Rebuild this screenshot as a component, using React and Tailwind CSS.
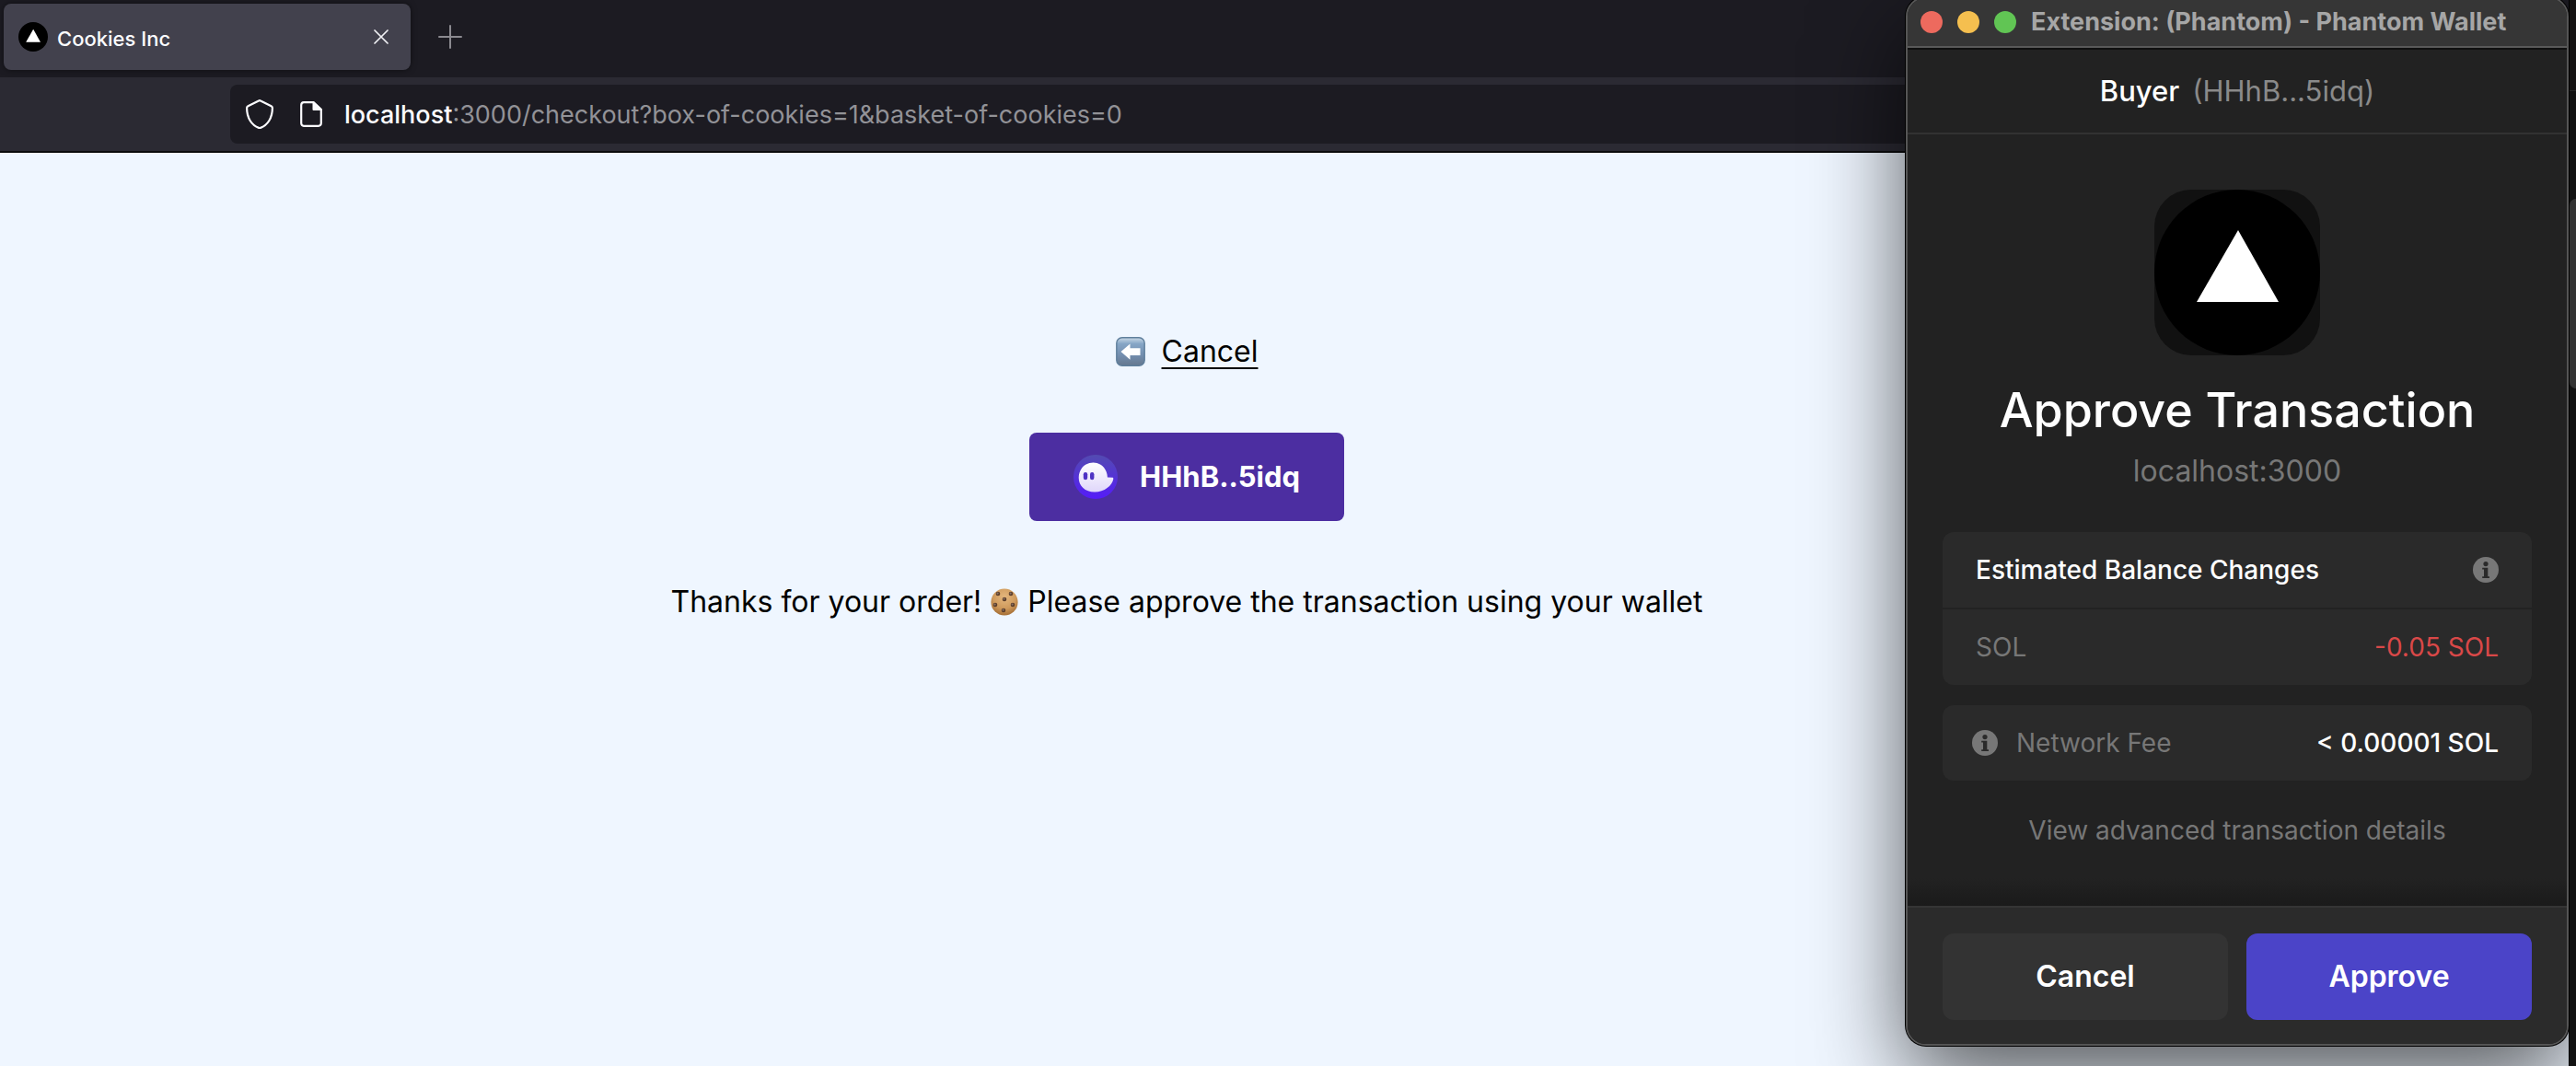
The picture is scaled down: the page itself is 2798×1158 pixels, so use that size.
import React from "react";

function TriangleLogo({ className }) {
  return (
    <svg viewBox="0 0 180 180" className={className} aria-hidden="true">
      <circle cx="90" cy="90" r="90" fill="#000" />
      <path d="M91 44 L135 122 H46 Z" fill="#fff" />
    </svg>
  );
}

function ArrowTile() {
  return (
    <svg viewBox="0 0 32 32" className="size-8" role="img" aria-label="Back">
      <defs>
        <linearGradient id="tile" x1="0" y1="0" x2="0" y2="1">
          <stop offset="0" stopColor="#c9d8e6" />
          <stop offset="0.22" stopColor="#86a6c6" />
          <stop offset="0.6" stopColor="#748fb0" />
          <stop offset="1" stopColor="#65788f" />
        </linearGradient>
      </defs>
      <rect x="0.8" y="0.8" width="30.4" height="30.4" rx="6" fill="url(#tile)" stroke="#5f7f9c" strokeWidth="1.4" />
      <path d="M5.5 16 L15.5 7.5 V12.2 H26.5 V20 H15.5 V24.8 Z" fill="#fff" />
    </svg>
  );
}

function Cookie() {
  const chips = [[8, 6], [22, 6], [15, 12], [5, 18], [24, 18], [14, 24]];
  return (
    <svg viewBox="0 0 30 30" className="size-[30px]" role="img" aria-label="Cookie">
      <defs>
        <radialGradient id="dough" cx="0.5" cy="0.32" r="0.7">
          <stop offset="0" stopColor="#e4b77e" />
          <stop offset="0.6" stopColor="#cf9a5c" />
          <stop offset="1" stopColor="#a16a31" />
        </radialGradient>
      </defs>
      <circle cx="15" cy="15" r="14.6" fill="url(#dough)" />
      {chips.map(([x, y]) => (
        <g key={`${x}-${y}`}>
          <circle cx={x} cy={y} r="2.3" fill="#5b3d2a" />
          <circle cx={x - 0.4} cy={y - 0.4} r="1.1" fill="#8b7364" />
        </g>
      ))}
    </svg>
  );
}

function GhostIcon() {
  return (
    <svg viewBox="0 0 48 48" className="size-12 shrink-0" aria-hidden="true">
      <defs>
        <linearGradient id="disc" x1="0" y1="0" x2="0" y2="1">
          <stop offset="0" stopColor="#534bb1" />
          <stop offset="1" stopColor="#551bf9" />
        </linearGradient>
        <linearGradient id="body" x1="0" y1="0" x2="0" y2="1">
          <stop offset="0" stopColor="#fff" />
          <stop offset="1" stopColor="#dfd6fa" />
        </linearGradient>
      </defs>
      <circle cx="24" cy="24" r="24" fill="url(#disc)" />
      <path
        d="M5.7 25 C5.7 15.5 12.5 8.6 21.5 8.6 C30 8.6 36.6 15.4 36.9 24.6 L42.2 24.7 C43 24.7 43.4 25.3 43.3 26.2 C42.2 33.4 33.5 40.5 23 40.5 C12.5 40.5 5.7 33.8 5.7 25 Z"
        fill="url(#body)"
      />
      <rect x="10.8" y="19" width="4.4" height="8.2" rx="2.2" fill="#4f33c4" />
      <rect x="18" y="19" width="4.4" height="8.2" rx="2.2" fill="#4f33c4" />
    </svg>
  );
}

function InfoIcon() {
  return (
    <svg viewBox="0 0 28 28" className="size-7 shrink-0" aria-hidden="true">
      <circle cx="14" cy="14" r="14" fill="#777" />
      <circle cx="14" cy="7.6" r="2.6" fill="#2a2a2a" />
      <path d="M10.2 11.8 H16.3 V21.2 H18 V23 H10.2 V21.2 H12 V13.6 H10.2 Z" fill="#2a2a2a" />
    </svg>
  );
}

function BrowserChrome() {
  return (
    <header className="flex flex-col">
      <div className="flex h-[84px] items-center bg-[#1c1b22] pb-1 pl-1">
        <div className="flex h-[72px] w-[442px] items-center rounded-lg bg-[#42414d] pr-5 pl-4 shadow-[0_0_6px_rgba(0,0,0,0.5)]">
          <TriangleLogo className="size-8" />
          <span className="ml-[10px] flex-1 pt-1 text-[22px] leading-8 font-medium text-[#fbfbfe]">Cookies Inc</span>
          <button type="button" aria-label="Close tab" className="p-1">
            <svg viewBox="0 0 16 16" className="size-4" aria-hidden="true">
              <path d="M1 1 L15 15 M15 1 L1 15" stroke="#f0f0f4" strokeWidth="1.7" strokeLinecap="round" />
            </svg>
          </button>
        </div>
        <button type="button" aria-label="New tab" className="ml-[30px]">
          <svg viewBox="0 0 26 26" className="size-[26px]" aria-hidden="true">
            <path d="M13 1 V25 M1 13 H25" stroke="#8b8a90" strokeWidth="2" strokeLinecap="round" />
          </svg>
        </button>
      </div>
      <div className="flex h-[82px] items-center border-b-2 border-[#0c0c0d] bg-[#2b2a33] pl-[250px]">
        <div className="flex h-16 flex-1 items-center rounded-l-lg bg-[#1c1b22] pl-4">
          <svg viewBox="0 0 32 32" className="size-8" fill="none" stroke="#fbfbfe" strokeWidth="2.2" strokeLinejoin="round" aria-hidden="true">
            <path d="M16 1.2 C16.4 1.2 16.7 1.3 17 1.5 L28.6 7.2 C29.4 7.6 29.9 8.4 29.9 9.3 C29.9 20.4 24.4 28.2 16.9 30.9 C16.3 31.1 15.7 31.1 15.1 30.9 C7.6 28.2 2.1 20.4 2.1 9.3 C2.1 8.4 2.6 7.6 3.4 7.2 L15 1.5 C15.3 1.3 15.6 1.2 16 1.2 Z" />
          </svg>
          <svg viewBox="0 0 24 28" className="ml-7 h-7 w-6" fill="none" stroke="#fbfbfe" strokeWidth="2.2" strokeLinejoin="round" aria-hidden="true">
            <path d="M4 1.2 H14.6 L22.8 9 V24 A3 3 0 0 1 19.8 26.8 H4 A3 3 0 0 1 1.2 24 V4 A3 3 0 0 1 4 1.2 Z" />
            <path d="M14.6 1.2 L22.8 9 H14.6 Z" fill="#fbfbfe" />
          </svg>
          <div className="flex flex-1 items-center pt-[2px] pl-6 text-[27px] leading-9">
            <label htmlFor="address" className="font-medium text-[#fbfbfe]">
              localhost
            </label>
            <input
              id="address"
              type="text"
              defaultValue=":3000/checkout?box-of-cookies=1&basket-of-cookies=0"
              className="min-w-0 flex-1 bg-transparent text-[#929297] outline-none"
            />
          </div>
        </div>
      </div>
    </header>
  );
}

function CheckoutPage() {
  return (
    <main className="flex flex-1 flex-col items-center bg-[#eff6ff] pt-48 pr-[212px] text-[32px] leading-[48px] text-black">
      <div className="flex items-center gap-[18px]">
        <ArrowTile />
        <a href="#cancel" className="underline decoration-2 underline-offset-[6px]">Cancel</a>
      </div>
      <button
        type="button"
        className="mt-16 flex h-24 items-center gap-6 rounded-lg bg-[#4c2ea1] px-12 text-[31px] font-bold text-white"
      >
        <GhostIcon />
        HHhB..5idq
      </button>
      <p className="mt-16 flex items-center gap-[10px]">
        <span>Thanks for your order!</span>
        <Cookie />
        <span>Please approve the transaction using your wallet</span>
      </p>
    </main>
  );
}

function WalletPopup() {
  return (
    <section
      aria-label="Phantom Wallet"
      className="absolute -top-1 right-2 flex w-[720px] flex-col overflow-hidden rounded-[22px] border-2 border-[#555] bg-[#222] text-[28px] leading-10 text-white shadow-[0_0_0_1px_#000,0_36px_100px_rgba(0,0,0,0.65)]"
    >
      <div className="flex h-[54px] items-center gap-4 border-b-2 border-[#5a5a5a] bg-[#363636] pl-[14px]">
        <button type="button" aria-label="Close" className="size-6 rounded-full bg-[#ed6a5e]" />
        <button type="button" aria-label="Minimize" className="size-6 rounded-full bg-[#f5bf4f]" />
        <button type="button" aria-label="Zoom" className="size-6 rounded-full bg-[#61c554]" />
        <h1 className="text-[27px] leading-9 font-bold text-[#a6a6a6]">Extension: (Phantom) - Phantom Wallet</h1>
      </div>
      <div className="flex h-[94px] items-center justify-center gap-[14px] border-t-2 border-b-2 border-t-[#101010] border-b-[#323232] text-[31px]">
        <span className="font-medium">Buyer</span>
        <span className="text-[#8a8a8a]">(HHhB...5idq)</span>
      </div>

      <div className="flex flex-col items-center px-[38px] pt-[60px] pb-8">
        <div className="rounded-[40px] bg-[#111]">
          <TriangleLogo className="size-[180px]" />
        </div>
        <h2 className="mt-7 text-[52px] leading-[64px] font-medium">Approve Transaction</h2>
        <p className="mt-[14px] text-[32px] text-[#777]">localhost:3000</p>

        <div className="mt-[46px] w-full overflow-hidden rounded-xl">
          <div className="flex h-[82px] items-center justify-between bg-[#2a2a2a] px-9">
            <span className="font-medium">Estimated Balance Changes</span>
            <InfoIcon />
          </div>
          <div className="mt-[2px] flex h-[82px] items-center justify-between bg-[#2a2a2a] px-9">
            <span className="text-[#777]">SOL</span>
            <span className="text-[#d94848]">-0.05 SOL</span>
          </div>
        </div>

        <div className="mt-[22px] flex h-[82px] w-full items-center rounded-xl bg-[#2a2a2a] pr-9 pl-8">
          <InfoIcon />
          <span className="ml-5 flex-1 text-[#777]">Network Fee</span>
          <span className="font-medium">&lt; 0.00001 SOL</span>
        </div>

        <a href="#details" className="mt-[34px] text-[#777]">View advanced transaction details</a>
      </div>

      <div className="h-[30px] bg-linear-to-b from-[#222] to-[#1a1a1a]" />
      <div className="grid grid-cols-2 gap-5 border-t-2 border-[#353535] bg-[#2b2b2b] px-[38px] pt-7 pb-[26px] text-[32px] font-semibold">
        <button type="button" className="h-[94px] rounded-xl bg-[#333]">Cancel</button>
        <button type="button" className="h-[94px] rounded-xl bg-[#4b44c8]">Approve</button>
      </div>
    </section>
  );
}

export default function App() {
  return (
    <div className="relative flex min-h-screen overflow-hidden font-['Inter',sans-serif]">
      <div className="flex min-w-0 flex-1 flex-col">
        <BrowserChrome />
        <CheckoutPage />
      </div>
      <aside className="relative z-10 flex w-2 flex-col border-l border-black bg-[#121212]">
        <div className="h-[99px] border-b border-[#262626] bg-[#151313]" />
        <div className="mt-[117px] h-[206px] rounded-l-lg bg-[#333]" />
      </aside>
      <WalletPopup />
    </div>
  );
}
